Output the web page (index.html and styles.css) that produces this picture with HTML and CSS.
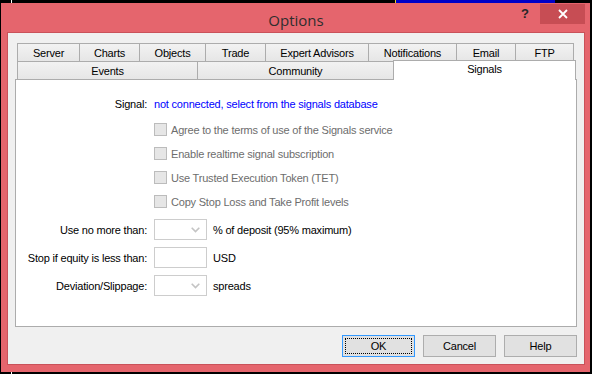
FILE: index.html
```html
<!DOCTYPE html>
<html>
<head>
<meta charset="utf-8">
<link rel="stylesheet" href="styles.css">
</head>
<body>
<div class="screen-top"><span class="px px-white"></span><span class="px px-yellow"></span><span class="blue-bar"></span></div>
<div class="window">
  <div class="titlebar">
    <div></div>
    <div class="title">Options</div>
    <div class="controls">
      <span class="help">?</span>
      <span class="close"><svg width="10" height="10" viewBox="0 0 10 10"><path d="M1 1 L9 9 M9 1 L1 9" stroke="#fff" stroke-width="1.8" fill="none"/></svg></span>
    </div>
  </div>
  <div class="client">
    <div class="tabctl">
      <div class="tabrow row1">
        <div class="tab w-server">Server</div>
        <div class="tab w-charts">Charts</div>
        <div class="tab w-objects">Objects</div>
        <div class="tab w-trade">Trade</div>
        <div class="tab w-ea">Expert Advisors</div>
        <div class="tab w-notif">Notifications</div>
        <div class="tab w-email">Email</div>
        <div class="tab w-ftp">FTP</div>
      </div>
      <div class="tabrow row2">
        <div class="tab w-events">Events</div>
        <div class="tab w-community">Community</div>
        <div class="tab tab-active w-signals">Signals</div>
      </div>
      <div class="panel">
        <div class="row signal-row">
          <div class="lbl">Signal:</div>
          <div class="ctl link">not connected, select from the signals database</div>
        </div>
        <div class="checks">
          <div class="row cb-row"><span class="cb"></span><span class="cb-text">Agree to the terms of use of the Signals service</span></div>
          <div class="row cb-row"><span class="cb"></span><span class="cb-text">Enable realtime signal subscription</span></div>
          <div class="row cb-row"><span class="cb"></span><span class="cb-text">Use Trusted Execution Token (TET)</span></div>
          <div class="row cb-row"><span class="cb"></span><span class="cb-text">Copy Stop Loss and Take Profit levels</span></div>
        </div>
        <div class="fields">
          <div class="row field-row">
            <div class="lbl">Use no more than:</div>
            <div class="box combo"><svg width="9" height="6" viewBox="0 0 9 6"><path d="M0.7 0.7 L4.5 4.6 L8.3 0.7" stroke="#c4c4c4" stroke-width="1.6" fill="none"/></svg></div>
            <div class="after">% of deposit (95% maximum)</div>
          </div>
          <div class="row field-row">
            <div class="lbl">Stop if equity is less than:</div>
            <div class="box"></div>
            <div class="after">USD</div>
          </div>
          <div class="row field-row">
            <div class="lbl">Deviation/Slippage:</div>
            <div class="box combo"><svg width="9" height="6" viewBox="0 0 9 6"><path d="M0.7 0.7 L4.5 4.6 L8.3 0.7" stroke="#c4c4c4" stroke-width="1.6" fill="none"/></svg></div>
            <div class="after">spreads</div>
          </div>
        </div>
      </div>
    </div>
    <div class="buttons">
      <div class="btn btn-default">OK</div>
      <div class="btn">Cancel</div>
      <div class="btn">Help</div>
    </div>
  </div>
</div>
<div class="screen-bottom"><span class="px px-white"></span></div>
</body>
</html>
```

FILE: styles.css
```css
* { box-sizing: border-box; }
html, body { margin: 0; padding: 0; }
body {
  width: 592px;
  height: 374px;
  background: #000;
  overflow: hidden;
  display: flex;
  flex-direction: column;
  font-family: "Liberation Sans", Arial, sans-serif;
  font-size: 11px;
  letter-spacing: -0.2px;
  color: #000;
}
.screen-top {
  height: 3px;
  display: flex;
  align-items: stretch;
}
.px { width: 1px; }
.px-white { background: #fff; margin-left: 11px; }
.px-yellow { background: #e8d020; margin-left: 383px; }
.blue-bar { background: #0000c8; width: 159px; }
.screen-bottom { height: 2px; display: flex; }

.window {
  margin-left: 1px;
  width: 589px;
  height: 369px;
  background: #e5656d;
  padding: 0 5px 7px 6px;
}
.titlebar {
  height: 29px;
  display: grid;
  grid-template-columns: 1fr auto 1fr;
  align-items: start;
}
.title {
  font-family: "Open Sans", "Noto Sans", sans-serif;
  font-size: 15px;
  letter-spacing: 0;
  color: #2e2e2e;
  line-height: 20px;
  padding-top: 7px;
}
.controls {
  display: flex;
  justify-content: flex-end;
  align-items: flex-start;
  margin-top: 1px;
}
.help {
  font-family: "Liberation Sans", Arial, sans-serif;
  font-weight: bold;
  font-size: 13px;
  color: #262626;
  line-height: 20px;
  margin-right: 11px;
  letter-spacing: 0;
}
.close {
  width: 45px;
  height: 20px;
  background: #c74d54;
  display: flex;
  align-items: center;
  justify-content: center;
}
.client {
  height: 333px;
  background: #f0f0f0;
  border: 1px solid #c9525a;
  padding: 10px 7px 7px 7px;
}
.tabctl { width: 562px; }
.tabrow {
  display: flex;
  padding-left: 2px;
}
.row2 { margin-top: -1px; align-items: flex-start; }
.tab {
  height: 19px;
  border: 1px solid #acacac;
  background: linear-gradient(#f2f2f2, #e6e6e6);
  display: flex;
  align-items: center;
  justify-content: center;
  white-space: nowrap;
  margin-left: -1px;
}
.tab:first-child { margin-left: 0; }
.tab-active {
  position: relative;
  z-index: 1;
  height: 20px;
  margin-top: -1px;
  border-bottom: 0;
  background: #fff;
  padding-bottom: 3px;
}
.w-server { width: 63px; }
.w-charts { width: 61px; }
.w-objects { width: 67px; }
.w-trade { width: 61px; }
.w-ea { width: 104px; }
.w-notif { width: 89px; }
.w-email { width: 60px; }
.w-ftp { width: 59px; }
.w-events { width: 181px; }
.w-community { width: 197px; }
.w-signals { width: 183px; }

.panel {
  margin-top: -1px;
  height: 248px;
  background: #fff;
  border: 1px solid #acacac;
  padding-top: 17px;
}
.row { display: flex; align-items: center; white-space: nowrap; }
.lbl { width: 131px; text-align: right; margin-right: 7px; }
.signal-row { height: 14px; line-height: 14px; }
.link { color: #0000ff; }
.checks {
  margin-top: 12px;
  display: flex;
  flex-direction: column;
  gap: 11px;
  padding-left: 138px;
}
.cb-row { height: 13px; }
.cb {
  width: 13px;
  height: 13px;
  border: 1px solid #bcbcbc;
  background: #e6e6e6;
  margin-right: 4px;
  flex: none;
}
.cb-text { color: #6d6d6d; }
.fields {
  margin-top: 11px;
  display: flex;
  flex-direction: column;
  gap: 7px;
}
.field-row { height: 21px; }
.box {
  width: 53px;
  height: 21px;
  border: 1px solid #cdcdcd;
  background: #fff;
  flex: none;
}
.combo {
  display: flex;
  align-items: center;
  justify-content: flex-end;
  padding-right: 6px;
}
.after { margin-left: 6px; }

.buttons {
  margin-top: 8px;
  display: flex;
  justify-content: flex-end;
  gap: 8px;
}
.btn {
  width: 73px;
  height: 22px;
  border: 1px solid #adadad;
  background: #e1e1e1;
  display: flex;
  align-items: center;
  justify-content: center;
}
.btn-default {
  border-color: #3399ff;
  position: relative;
}
.btn-default::after {
  content: "";
  position: absolute;
  inset: 2px;
  border: 1px dotted #000;
}
```
